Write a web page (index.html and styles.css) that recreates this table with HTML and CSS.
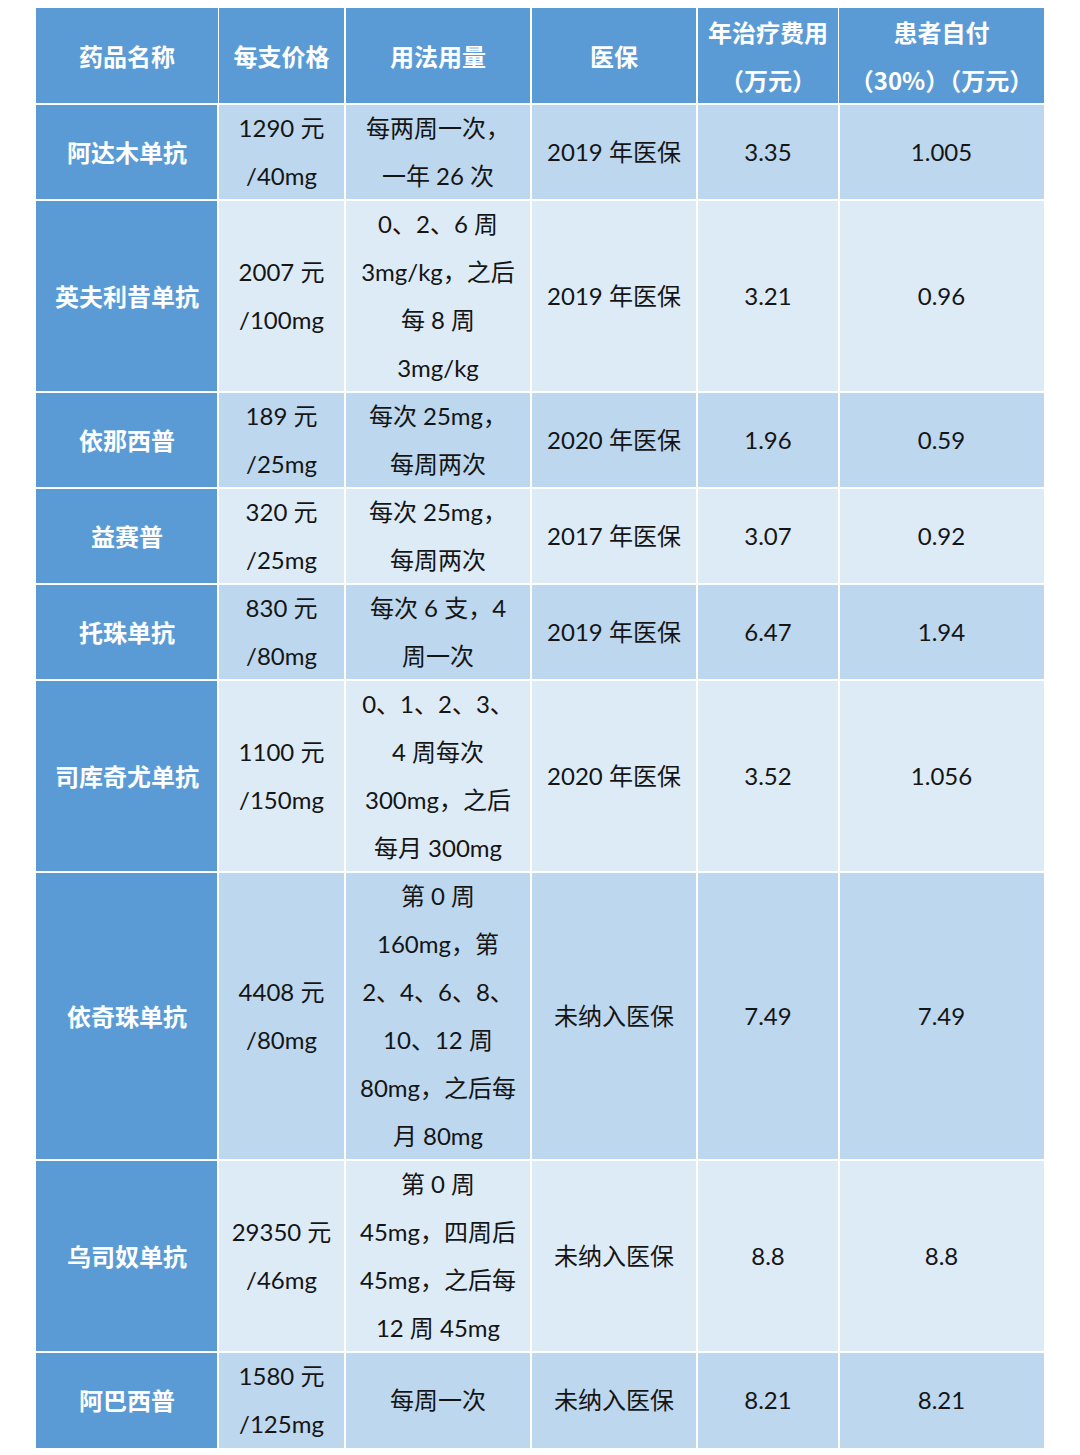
FILE: index.html
```html
<!DOCTYPE html>
<html lang="zh">
<head>
<meta charset="utf-8">
<link rel="stylesheet" href="styles.css">
</head>
<body>
<table class="drug-table">
  <colgroup>
    <col class="c1"><col class="c2"><col class="c3"><col class="c4"><col class="c5"><col class="c6">
  </colgroup>
  <thead>
    <tr>
      <th>药品名称</th>
      <th>每支价格</th>
      <th>用法用量</th>
      <th>医保</th>
      <th>年治疗费用<br>（万元）</th>
      <th>患者自付<br>（30%）（万元）</th>
    </tr>
  </thead>
  <tbody>
    <tr class="dark">
      <th>阿达木单抗</th>
      <td>1290 元<br>/40mg</td>
      <td>每两周一次，<br>一年 26 次</td>
      <td>2019 年医保</td>
      <td>3.35</td>
      <td>1.005</td>
    </tr>
    <tr class="light">
      <th>英夫利昔单抗</th>
      <td>2007 元<br>/100mg</td>
      <td>0、2、6 周<br>3mg/kg，之后<br>每 8 周<br>3mg/kg</td>
      <td>2019 年医保</td>
      <td>3.21</td>
      <td>0.96</td>
    </tr>
    <tr class="dark">
      <th>依那西普</th>
      <td>189 元<br>/25mg</td>
      <td>每次 25mg，<br>每周两次</td>
      <td>2020 年医保</td>
      <td>1.96</td>
      <td>0.59</td>
    </tr>
    <tr class="light">
      <th>益赛普</th>
      <td>320 元<br>/25mg</td>
      <td>每次 25mg，<br>每周两次</td>
      <td>2017 年医保</td>
      <td>3.07</td>
      <td>0.92</td>
    </tr>
    <tr class="dark">
      <th>托珠单抗</th>
      <td>830 元<br>/80mg</td>
      <td>每次 6 支，4<br>周一次</td>
      <td>2019 年医保</td>
      <td>6.47</td>
      <td>1.94</td>
    </tr>
    <tr class="light">
      <th>司库奇尤单抗</th>
      <td>1100 元<br>/150mg</td>
      <td>0、1、2、3、<br>4 周每次<br>300mg，之后<br>每月 300mg</td>
      <td>2020 年医保</td>
      <td>3.52</td>
      <td>1.056</td>
    </tr>
    <tr class="dark">
      <th>依奇珠单抗</th>
      <td>4408 元<br>/80mg</td>
      <td>第 0 周<br>160mg，第<br>2、4、6、8、<br>10、12 周<br>80mg，之后每<br>月 80mg</td>
      <td>未纳入医保</td>
      <td>7.49</td>
      <td>7.49</td>
    </tr>
    <tr class="light">
      <th>乌司奴单抗</th>
      <td>29350 元<br>/46mg</td>
      <td>第 0 周<br>45mg，四周后<br>45mg，之后每<br>12 周 45mg</td>
      <td>未纳入医保</td>
      <td>8.8</td>
      <td>8.8</td>
    </tr>
    <tr class="dark">
      <th>阿巴西普</th>
      <td>1580 元<br>/125mg</td>
      <td>每周一次</td>
      <td>未纳入医保</td>
      <td>8.21</td>
      <td>8.21</td>
    </tr>
  </tbody>
</table>
</body>
</html>
```
FILE: styles.css
```css
html, body {
  margin: 0;
  padding: 0;
  background: #ffffff;
}
body {
  padding: 8px 0 0 36px;
  font-family: "Lato", "Noto Sans CJK SC", sans-serif;
}
.drug-table {
  border-collapse: separate;
  border-spacing: 0;
  table-layout: fixed;
  width: 1008px;
  font-size: 24px;
  line-height: 48px;
  color: #151515;
}
.c1 { width: 182px; }
.c2 { width: 127px; }
.c3 { width: 186px; }
.c4 { width: 166px; }
.c5 { width: 142px; }
.c6 { width: 205px; }
.drug-table th,
.drug-table td {
  border: none;
  padding: 0;
  text-align: center;
  vertical-align: middle;
  white-space: nowrap;
  box-shadow: inset 1px 1px 0 #ffffff, inset -1px -1px 0 #ffffff;
}
.drug-table thead th {
  background: #5b9bd5;
  color: #ffffff;
  font-weight: 700;
  font-family: "Noto Sans CJK SC", sans-serif;
  font-size: 24px;
  line-height: 48px;
  box-shadow: inset 1px 0 0 #ffffff, inset -1px -1px 0 #ffffff;
}
.drug-table thead th:first-child {
  box-shadow: inset 0 -1px 0 #ffffff;
}
.drug-table thead th:last-child {
  box-shadow: inset 0 -1px 0 #ffffff;
}
.drug-table tbody th {
  background: #5b9bd5;
  color: #ffffff;
  font-weight: 700;
  font-family: "Noto Sans CJK SC", sans-serif;
  font-size: 24px;
  box-shadow: inset 0 1px 0 #ffffff, inset -1px -1px 0 #ffffff;
}
.drug-table tbody td:last-child {
  box-shadow: inset 1px 1px 0 #ffffff, inset 0 -1px 0 #ffffff;
}
.drug-table tbody tr:last-child th {
  box-shadow: inset 0 1px 0 #ffffff, inset -1px 0 0 #ffffff;
}
.drug-table tbody tr:last-child td {
  box-shadow: inset 1px 1px 0 #ffffff, inset -1px 0 0 #ffffff;
}
.drug-table tbody tr:last-child td:last-child {
  box-shadow: inset 1px 1px 0 #ffffff;
}
.dark td { background: #bdd7ee; }
.light td { background: #ddebf7; }
```
